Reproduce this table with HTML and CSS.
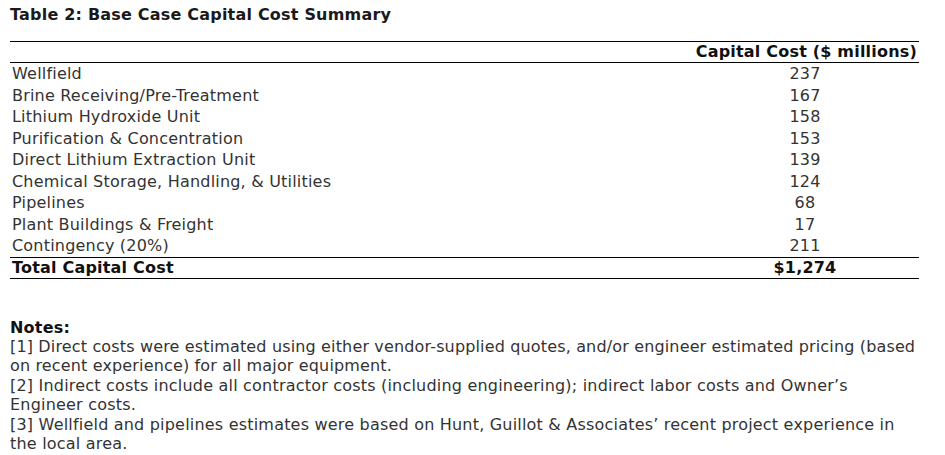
FILE: index.html
```html
<!DOCTYPE html>
<html>
<head>
<meta charset="utf-8">
<link rel="stylesheet" href="styles.css">
</head>
<body>
<div class="page">
  <h1 class="title">Table 2: Base Case Capital Cost Summary</h1>
  <table class="cost">
    <thead>
      <tr><th class="label"></th><th class="value">Capital Cost ($ millions)</th></tr>
    </thead>
    <tbody>
      <tr><td class="label">Wellfield</td><td class="num">237</td></tr>
      <tr><td class="label">Brine Receiving/Pre-Treatment</td><td class="num">167</td></tr>
      <tr><td class="label">Lithium Hydroxide Unit</td><td class="num">158</td></tr>
      <tr><td class="label">Purification &amp; Concentration</td><td class="num">153</td></tr>
      <tr><td class="label">Direct Lithium Extraction Unit</td><td class="num">139</td></tr>
      <tr><td class="label">Chemical Storage, Handling, &amp; Utilities</td><td class="num">124</td></tr>
      <tr><td class="label">Pipelines</td><td class="num">68</td></tr>
      <tr><td class="label">Plant Buildings &amp; Freight</td><td class="num">17</td></tr>
      <tr><td class="label">Contingency (20%)</td><td class="num">211</td></tr>
    </tbody>
    <tfoot>
      <tr class="total"><td class="label">Total Capital Cost</td><td class="num">$1,274</td></tr>
    </tfoot>
  </table>
  <div class="notes">
    <p class="notes-head">Notes:</p>
    <p class="note-tight">[1] Direct costs were estimated using either vendor-supplied quotes, and/or engineer estimated pricing (based<br>on recent experience) for all major equipment.</p>
    <p>[2] Indirect costs include all contractor costs (including engineering); indirect labor costs and Owner’s<br>Engineer costs.</p>
    <p>[3] Wellfield and pipelines estimates were based on Hunt, Guillot &amp; Associates’ recent project experience in<br>the local area.</p>
  </div>
</div>
</body>
</html>
```
FILE: styles.css
```css
html, body {
  margin: 0;
  padding: 0;
  background: #fff;
}
body {
  font-family: "DejaVu Sans", Verdana, sans-serif;
  font-size: 16px;
  letter-spacing: 0.2px;
  color: #333;
}
.page {
  padding: 5px 0 0 10px;
}
.title {
  margin: 0;
  font-size: 16px;
  font-weight: bold;
  color: #1a1a1a;
  line-height: 20px;
}
.cost {
  width: 909px;
  border-collapse: collapse;
  margin-top: 16px;
}
.cost th, .cost td {
  padding: 0 2px;
}
.cost thead th {
  border-top: 1px solid #000;
  border-bottom: 1px solid #000;
  line-height: 20px;
  height: 20px;
  font-weight: bold;
  color: #111;
}
.cost th.value {
  text-align: right;
  width: 224px;
}
.cost tbody td {
  line-height: 21.5px;
}
.cost td.label {
  text-align: left;
}
.cost td.num {
  text-align: center;
}
.cost .total td {
  border-top: 1px solid #000;
  border-bottom: 1px solid #000;
  font-weight: bold;
  color: #111;
  line-height: 20px;
  height: 20px;
}
.notes {
  margin-top: 39px;
  line-height: 19.4px;
  width: 935px;
}
.notes p {
  margin: 0;
}
.notes .note-tight {
  letter-spacing: 0.15px;
}
.notes .notes-head {
  font-weight: bold;
  color: #111;
}
```
